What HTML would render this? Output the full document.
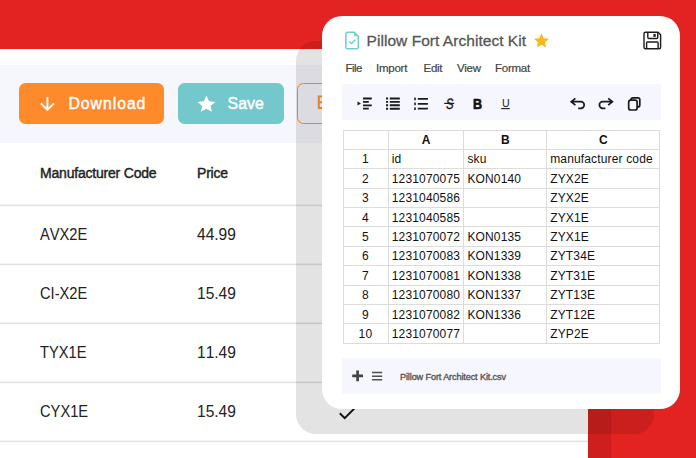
<!DOCTYPE html>
<html lang="en">
<head>
<meta charset="utf-8">
<title>Pillow Fort Architect Kit</title>
<style>
*{box-sizing:border-box;margin:0;padding:0}
html,body{width:696px;height:458px;overflow:hidden}
body{background:#e32321;font-family:"Liberation Sans",sans-serif;position:relative;color:#212121}
.abs{position:absolute}
#panel{left:0;top:49px;width:588px;height:409px;background:#fff}
#tbar{left:0;top:65px;width:588px;height:77.5px;background:#f6f6fd}
.btn{top:83.2px;height:40.8px;border-radius:6.5px;color:#fff;font-size:15.8px;letter-spacing:1.2px;line-height:40.8px;white-space:nowrap;-webkit-text-stroke:0.45px #fff}
#dl{left:18.5px;width:145.7px;background:#ff8a2b}
#sv{left:178px;width:106px;background:#73c8cb}
#ex{left:297px;width:120px;background:transparent;border:1.4px solid #ff9438}
.btn span{position:absolute;top:0.9px}
.hline{left:0;width:588px;height:3px;background:linear-gradient(#f3f3f3 0,#f3f3f3 1px,#e1e1e1 1px,#e1e1e1 2px,#fbfbfb 2px,#fbfbfb 3px)}
.th{font-size:14px;color:#222;white-space:nowrap;line-height:16px;letter-spacing:-0.2px;-webkit-text-stroke:0.42px #222}
.td{font-kerning:none;font-size:16px;color:#222;white-space:nowrap;line-height:18px;transform-origin:0 50%;transform:scaleX(0.97)}
.tl{transform:scaleX(0.917)}
#strip{left:588px;top:49px;width:22.5px;height:409px;background:rgba(0,0,0,0.09)}
#shadow{left:296px;top:41px;width:358px;height:393px;border-radius:20px;background:rgba(0,0,0,0.11)}
#card{left:322px;top:15.7px;width:357.5px;height:393.2px;border-radius:20px;background:#fff}
#title{left:366.6px;top:31.4px;font-size:15.5px;color:#555;white-space:nowrap;line-height:20px;letter-spacing:0.04px;-webkit-text-stroke:0.3px #555}
.menu{top:61px;font-size:11.5px;color:#444;white-space:nowrap;line-height:14px;letter-spacing:-0.25px;-webkit-text-stroke:0.2px #444}
#ctb{left:342px;top:83.5px;width:319.2px;height:36px;background:#f5f6fe}
#foot{left:341.5px;top:357.5px;width:319.7px;height:36.5px;background:#f5f6fe}
#fname{left:400px;top:371px;font-size:9.2px;letter-spacing:-0.15px;color:#555;white-space:nowrap;line-height:12px;-webkit-text-stroke:0.35px #555}
table{position:absolute;left:343px;top:129.5px;border-collapse:collapse;table-layout:fixed;width:317px}
td{border:1px solid #dcdcdc;height:19.4px;font-size:12px;letter-spacing:0.15px;color:#111;padding:2.6px 0 0 3px;vertical-align:top;white-space:nowrap;overflow:hidden;line-height:14px}
td.n{text-align:center;padding:2.6px 1px 0 0}
tr.h td{text-align:center;font-weight:bold;padding:2.2px 0 0 0}
svg{position:absolute;overflow:visible}
</style>
</head>
<body>
<div class="abs" id="panel"></div>
<div class="abs" id="tbar"></div>

<div class="abs btn" id="dl"><span style="left:50px;letter-spacing:0.95px">Download</span></div>
<div class="abs btn" id="sv"><span style="left:49.5px;letter-spacing:0.1px">Save</span></div>
<div class="abs btn" id="ex"></div>
<svg style="left:0;top:0" width="696" height="458" viewBox="0 0 696 458">
  <path d="M47.4 97.3V109.6M40.9 103.4L47.4 109.9L53.9 103.4" fill="none" stroke="#fff" stroke-width="2"/>
  <path d="M206.4 95.6l2.6 5.75 6.4.6-4.85 4.15 1.45 5.75-5.6-3.15-5.6 3.15 1.45-5.75-4.85-4.15 6.4-.6z" fill="#fff"/>
  <path d="M326 96.6H318.8V108H326M318.8 102.3H326" fill="none" stroke="#ff9236" stroke-width="2"/>
</svg>

<div class="abs th" style="left:40px;top:165px">Manufacturer Code</div>
<div class="abs th" style="left:197px;top:165px">Price</div>
<div class="abs hline" style="top:204px"></div>
<div class="abs hline" style="top:263px"></div>
<div class="abs hline" style="top:322px"></div>
<div class="abs hline" style="top:381px"></div>
<div class="abs hline" style="top:440px"></div>
<div class="abs td tl" style="left:40px;top:225.7px">AVX2E</div>
<div class="abs td" style="left:197px;top:225.7px">44.99</div>
<div class="abs td tl" style="left:40px;top:284.7px">CI-X2E</div>
<div class="abs td" style="left:197px;top:284.7px">15.49</div>
<div class="abs td tl" style="left:40px;top:343.7px">TYX1E</div>
<div class="abs td" style="left:197px;top:343.7px">11.49</div>
<div class="abs td tl" style="left:40px;top:402.7px">CYX1E</div>
<div class="abs td" style="left:197px;top:402.7px">15.49</div>

<div class="abs" id="strip"></div>
<div class="abs" id="shadow"></div>
<svg style="left:0;top:0" width="696" height="458" viewBox="0 0 696 458">
  <path d="M339.8 413.3L344.7 418.2L356 406.9" fill="none" stroke="#111" stroke-width="2"/>
</svg>

<div class="abs" id="card"></div>
<div class="abs" id="title">Pillow Fort Architect Kit</div>
<div class="abs menu" style="left:345.6px;letter-spacing:-0.6px">File</div>
<div class="abs menu" style="left:376px">Import</div>
<div class="abs menu" style="left:423.5px">Edit</div>
<div class="abs menu" style="left:457px">View</div>
<div class="abs menu" style="left:495px">Format</div>
<div class="abs" id="ctb"></div>
<div class="abs" id="foot"></div>
<div class="abs" id="fname">Pillow Fort Architect Kit.csv</div>

<table>
<colgroup><col style="width:44.8px"><col style="width:75.6px"><col style="width:82.8px"><col style="width:113.3px"></colgroup>
<tr class="h"><td></td><td>A</td><td>B</td><td>C</td></tr>
<tr><td class="n">1</td><td>id</td><td>sku</td><td>manufacturer code</td></tr>
<tr><td class="n">2</td><td>1231070075</td><td>KON0140</td><td>ZYX2E</td></tr>
<tr><td class="n">3</td><td>1231040586</td><td></td><td>ZYX2E</td></tr>
<tr><td class="n">4</td><td>1231040585</td><td></td><td>ZYX1E</td></tr>
<tr><td class="n">5</td><td>1231070072</td><td>KON0135</td><td>ZYX1E</td></tr>
<tr><td class="n">6</td><td>1231070083</td><td>KON1339</td><td>ZYT34E</td></tr>
<tr><td class="n">7</td><td>1231070081</td><td>KON1338</td><td>ZYT31E</td></tr>
<tr><td class="n">8</td><td>1231070080</td><td>KON1337</td><td>ZYT13E</td></tr>
<tr><td class="n">9</td><td>1231070082</td><td>KON1336</td><td>ZYT12E</td></tr>
<tr><td class="n">10</td><td>1231070077</td><td></td><td>ZYP2E</td></tr>
</table>

<svg style="left:0;top:0" width="696" height="458" viewBox="0 0 696 458">
  <!-- file icon -->
  <path d="M347.5 32.3H354.3L358.3 36.3V47.2A1.6 1.6 0 0 1 356.7 48.8H347.5A1.6 1.6 0 0 1 345.9 47.2V33.9A1.6 1.6 0 0 1 347.5 32.3Z" fill="none" stroke="#70cdd0" stroke-width="1.5"/>
  <path d="M354.3 32.3V36.3H358.3Z" fill="#70cdd0"/>
  <path d="M349.3 41.6L351.5 43.6L355.4 39.7" fill="none" stroke="#70cdd0" stroke-width="1.4"/>
  <!-- gold star -->
  <path d="M541.5 33.2l2.2 5 5.4.5-4.1 3.6 1.25 5.3-4.75-2.85-4.75 2.85 1.25-5.3-4.1-3.6 5.4-.5z" fill="#f6b81f"/>
  <!-- floppy -->
  <g fill="none" stroke="#1c1c1c" stroke-width="1.4" stroke-linejoin="round">
    <path d="M645.5 32.2H658L660.6 34.8V47.2A1.5 1.5 0 0 1 659.1 48.7H645.5A1.5 1.5 0 0 1 644 47.2V33.7A1.5 1.5 0 0 1 645.5 32.2Z"/>
    <path d="M647.8 32.2V37.3A1.2 1.2 0 0 0 649 38.5H656.6A1.2 1.2 0 0 0 657.8 37.3V32.2"/>
    <path d="M646.6 48.7V43A1 1 0 0 1 647.6 42H657.1A1 1 0 0 1 658.1 43V48.7"/>
  </g>
  <rect x="653.4" y="33.9" width="2.3" height="3" fill="#222"/>
</svg>

<!-- toolbar icons -->
<svg style="left:0;top:0" width="696" height="458" viewBox="0 0 696 458">
  <g stroke="#1a1a1a" fill="none" stroke-width="1.8">
    <!-- indent -->
    <path d="M363 98.5H371.8M363 101.9H368.8M363 105.3H371.8M363 108.7H368.8"/>
    <!-- numbered list lines -->
    <path d="M417.8 98.8H427.9M417.8 103.8H427.9M417.8 108.7H427.9"/>
  </g>
  <path d="M357.5 101.6L360.9 103.6L357.5 105.6Z" fill="#1a1a1a"/>
  <g stroke="#1a1a1a" fill="none" stroke-width="1.9">
    <path d="M389.8 98.5H399.8M389.8 101.9H399.8M389.8 105.3H399.8M389.8 108.7H399.8"/>
    <path d="M386 98.5H388.1M386 101.9H388.1M386 105.3H388.1M386 108.7H388.1"/>
  </g>
  <g fill="#1a1a1a">
    <rect x="414.2" y="97.6" width="1.6" height="2.6"/>
    <rect x="414.2" y="102.6" width="1.6" height="2.6"/>
    <rect x="414.2" y="107.4" width="1.6" height="2.6"/>
  </g>
  <!-- strike line, underline -->
  <path d="M444.2 103.4H454.2" stroke="#1a1a1a" stroke-width="1.2"/>
  <path d="M501.2 108.6H509.7" stroke="#1a1a1a" stroke-width="1.1"/>
  <!-- undo / redo -->
  <g stroke="#1a1a1a" fill="none" stroke-width="1.7">
    <path d="M575.4 98.3L571.2 101.7L575.4 105.1M571.4 101.7H580.9A3.3 3.3 0 0 1 580.9 108.3H578.2"/>
    <path d="M608.2 98.3L612.4 101.7L608.2 105.1M612.2 101.7H602.7A3.3 3.3 0 0 0 602.7 108.3H605.4"/>
    <!-- copy -->
    <rect x="628.7" y="100.2" width="8.4" height="9.8" rx="2"/>
    <path d="M631 100.2V99.8A2 2 0 0 1 633 97.8H637.8A2 2 0 0 1 639.8 99.8V104.9A2 2 0 0 1 637.8 106.9H637.1"/>
  </g>
  <!-- footer icons -->
  <path d="M357.6 370.4V381.2M352.2 375.8H363" stroke="#444" stroke-width="2.7" fill="none"/>
  <path d="M372 372.5H382.2M372 376.2H382.2M372 379.8H382.2" stroke="#505050" stroke-width="1.6" fill="none"/>
</svg>
<div class="abs" style="left:444.7px;top:94.5px;font-size:15px;line-height:18px;color:#1a1a1a;transform-origin:50% 50%;transform:scaleX(0.74) skewX(-7deg);-webkit-text-stroke:0.4px #1a1a1a">S</div>
<div class="abs" style="left:473.2px;top:94.9px;font-size:14.5px;line-height:18px;font-weight:bold;color:#111;-webkit-text-stroke:0.7px #111;transform-origin:0 50%;transform:scaleX(0.86)">B</div>
<div class="abs" style="left:501.6px;top:95.9px;font-size:11.5px;line-height:14px;color:#1a1a1a;transform-origin:0 50%;transform:scaleX(0.92)">U</div>
</body>
</html>
